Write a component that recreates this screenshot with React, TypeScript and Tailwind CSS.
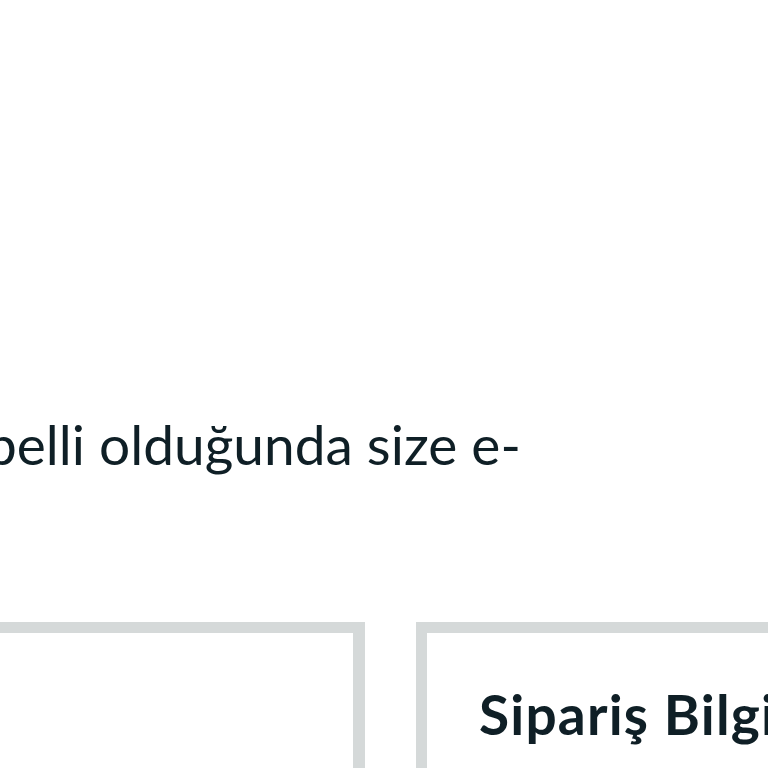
import React from "react";

export default function App() {
  return (
    <div
      className="w-[768px] h-[768px] overflow-hidden bg-white text-[#0f1f26]"
      style={{ fontFamily: "Lato, 'Noto Sans', sans-serif" }}
    >
      <div className="pt-[412px] -ml-[14px]">
        <p className="whitespace-nowrap text-[55px] leading-[64px]">belli olduğunda size e-</p>
      </div>
      <div className="mt-[146px] -ml-[40px] flex gap-[51px]">
        <div className="w-[405px] h-[300px] shrink-0 border-[11px] border-r-[12px] border-[#d5d9d9]" />
        <div className="w-[500px] h-[300px] shrink-0 border-[11px] border-[#d5d9d9] pl-[52px] pt-[54px]">
          <h2 className="whitespace-nowrap text-[55px] font-bold leading-[55px] tracking-[1.2px]">Sipariş Bilgileri</h2>
        </div>
      </div>
    </div>
  );
}
